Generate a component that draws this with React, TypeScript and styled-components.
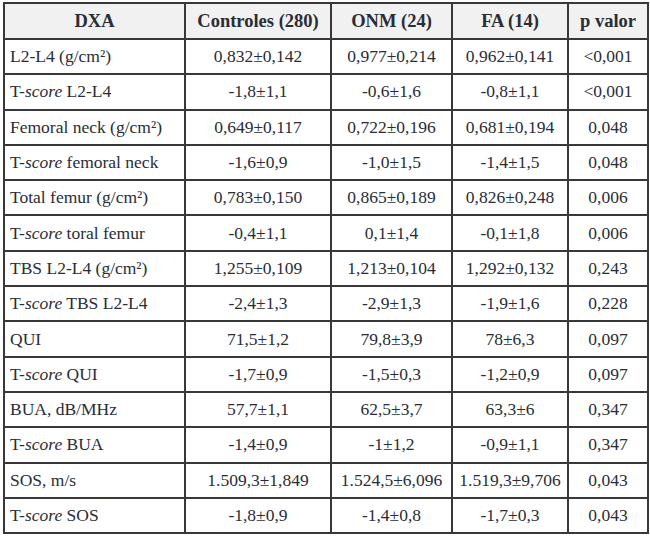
import React from "react";
import styled, { createGlobalStyle } from "styled-components";

const GlobalStyle = createGlobalStyle`
  body {
    margin: 0;
    padding: 2px 0 0 3px;
    background: #ffffff;
    font-family: "Liberation Serif", "Times New Roman", serif;
  }
`;

const StyledTable = styled.table`
  width: 644px;
  border-collapse: collapse;
  table-layout: fixed;
  font-size: 17.5px;
  color: #2a2d36;
`;

const StyledHeadCell = styled.th`
  height: 34px;
  padding: 0;
  border: 2px solid #383838;
  background: #f1f1f1;
  font-weight: bold;
  font-size: 18.5px;
  text-align: center;
`;

const StyledRow = styled.tr`
  height: 35.3px;
`;

const StyledCell = styled.td<{ $left?: boolean }>`
  padding: 0 0 0 ${(p) => (p.$left ? "5px" : "0")};
  border: 2px solid #383838;
  text-align: ${(p) => (p.$left ? "left" : "center")};
  white-space: nowrap;
`;

interface Row {
  label: string;
  tscore?: boolean;
  controles: string;
  onm: string;
  fa: string;
  p: string;
}

const rows: Row[] = [
  { label: "L2-L4 (g/cm²)", controles: "0,832±0,142", onm: "0,977±0,214", fa: "0,962±0,141", p: "<0,001" },
  { label: "L2-L4", tscore: true, controles: "-1,8±1,1", onm: "-0,6±1,6", fa: "-0,8±1,1", p: "<0,001" },
  { label: "Femoral neck (g/cm²)", controles: "0,649±0,117", onm: "0,722±0,196", fa: "0,681±0,194", p: "0,048" },
  { label: "femoral neck", tscore: true, controles: "-1,6±0,9", onm: "-1,0±1,5", fa: "-1,4±1,5", p: "0,048" },
  { label: "Total femur (g/cm²)", controles: "0,783±0,150", onm: "0,865±0,189", fa: "0,826±0,248", p: "0,006" },
  { label: "toral femur", tscore: true, controles: "-0,4±1,1", onm: "0,1±1,4", fa: "-0,1±1,8", p: "0,006" },
  { label: "TBS L2-L4 (g/cm²)", controles: "1,255±0,109", onm: "1,213±0,104", fa: "1,292±0,132", p: "0,243" },
  { label: "TBS L2-L4", tscore: true, controles: "-2,4±1,3", onm: "-2,9±1,3", fa: "-1,9±1,6", p: "0,228" },
  { label: "QUI", controles: "71,5±1,2", onm: "79,8±3,9", fa: "78±6,3", p: "0,097" },
  { label: "QUI", tscore: true, controles: "-1,7±0,9", onm: "-1,5±0,3", fa: "-1,2±0,9", p: "0,097" },
  { label: "BUA, dB/MHz", controles: "57,7±1,1", onm: "62,5±3,7", fa: "63,3±6", p: "0,347" },
  { label: "BUA", tscore: true, controles: "-1,4±0,9", onm: "-1±1,2", fa: "-0,9±1,1", p: "0,347" },
  { label: "SOS, m/s", controles: "1.509,3±1,849", onm: "1.524,5±6,096", fa: "1.519,3±9,706", p: "0,043" },
  { label: "SOS", tscore: true, controles: "-1,8±0,9", onm: "-1,4±0,8", fa: "-1,7±0,3", p: "0,043" },
];

const App = () => {
  return (
    <>
      <GlobalStyle />
      <StyledTable>
        <colgroup>
          <col style={{ width: 181 }} />
          <col style={{ width: 146 }} />
          <col style={{ width: 121 }} />
          <col style={{ width: 116 }} />
          <col style={{ width: 80 }} />
        </colgroup>
        <thead>
          <tr>
            <StyledHeadCell>DXA</StyledHeadCell>
            <StyledHeadCell>Controles (280)</StyledHeadCell>
            <StyledHeadCell>ONM (24)</StyledHeadCell>
            <StyledHeadCell>FA (14)</StyledHeadCell>
            <StyledHeadCell>p valor</StyledHeadCell>
          </tr>
        </thead>
        <tbody>
          {rows.map((r, i) => (
            <StyledRow key={i}>
              <StyledCell $left>
                {r.tscore ? (
                  <>
                    T-<i>score</i> {r.label}
                  </>
                ) : (
                  r.label
                )}
              </StyledCell>
              <StyledCell>{r.controles}</StyledCell>
              <StyledCell>{r.onm}</StyledCell>
              <StyledCell>{r.fa}</StyledCell>
              <StyledCell>{r.p}</StyledCell>
            </StyledRow>
          ))}
        </tbody>
      </StyledTable>
    </>
  );
};

export default App;
